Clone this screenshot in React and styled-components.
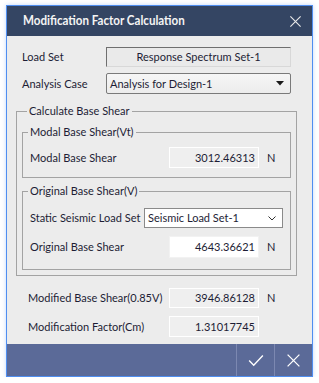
import React from "react";
import styled, { createGlobalStyle } from "styled-components";

const Global = createGlobalStyle`
  html, body { margin: 0; padding: 0; background: #ffffff; }
  body { font-family: Lato, "Liberation Sans", sans-serif; }
  * { box-sizing: border-box; }
`;

const Window = styled.div`
  margin: 5px 0 0 6px;
  width: 307px;
  border: 1px solid #4f8ef0;
  box-shadow: 0 0 4px rgba(80, 140, 240, 0.35);
  background: #ececec;
  display: flex;
  flex-direction: column;
`;

const TitleBar = styled.div`
  height: 30px;
  background: #344563;
  display: flex;
  align-items: center;
  justify-content: space-between;
  padding: 0 10px 0 16px;
`;

const Title = styled.div`
  color: #f4f4f4;
  font-size: 11.6px;
  font-weight: 700;
  line-height: 16px;
  transform: scaleY(1.12);
`;

const Body = styled.div`
  padding: 11px 0 7px 9px;
  display: flex;
  flex-direction: column;
  font-size: 11px;
  color: #1d1d35;
`;

const TopRow = styled.div`
  display: grid;
  grid-template-columns: 84px 185px;
  align-items: center;
  padding-left: 6px;
  margin-top: ${(p) => p.$mt || 0}px;
`;

const Label = styled.div`
  white-space: nowrap;
  line-height: 14px;
`;

const ReadOnly = styled.div`
  height: 20px;
  border-top: 1px solid #6f6f6f;
  border-left: 1px solid #6f6f6f;
  border-right: 1px solid #d8d8d8;
  border-bottom: 1px solid #d8d8d8;
  background: #eaeaea;
  display: flex;
  align-items: center;
  justify-content: center;
  line-height: 14px;
`;

const Select = styled.div`
  height: ${(p) => p.$h || 21}px;
  border: 1px solid ${(p) => (p.$flat ? "#8a8a8a" : "#7a7a7a")};
  border-radius: ${(p) => (p.$flat ? 0 : 2)}px;
  background: ${(p) => (p.$flat ? "#ffffff" : "linear-gradient(#f6f6f6, #ececec)")};
  display: flex;
  align-items: center;
  justify-content: space-between;
  padding: 0 6px 0 3px;
  line-height: 14px;
`;

const Group = styled.fieldset`
  margin: ${(p) => p.$m || "0"};
  padding: ${(p) => p.$p || "0"};
  border: 1px solid #a3a3a3;
  min-width: 0;
  display: flex;
  flex-direction: column;
`;

const Legend = styled.legend`
  padding: 0 2px;
  margin-left: 5px;
  line-height: 14px;
  font-size: 11px;
  color: #1d1d35;
`;

const FieldRow = styled.div`
  display: grid;
  grid-template-columns: ${(p) => p.$label}px 90px 31px;
  align-items: center;
  padding-left: ${(p) => p.$pl}px;
  margin-top: ${(p) => p.$mt || 0}px;
`;

const SelectRow = styled.div`
  display: grid;
  grid-template-columns: 114px 139px;
  align-items: center;
  padding-left: 7px;
`;

const NumField = styled.div`
  height: ${(p) => p.$h || 21}px;
  background: ${(p) => (p.$white ? "#ffffff" : "#efefef")};
  border: 1px solid ${(p) => (p.$white ? "#f2f2f2" : "#ffffff")};
  display: flex;
  align-items: center;
  justify-content: flex-end;
  padding-right: 3px;
  line-height: 14px;
`;

const Unit = styled.div`
  padding-left: 8px;
  line-height: 14px;
`;

const Footer = styled.div`
  height: 32px;
  background: #5b6a98;
  display: flex;
  justify-content: flex-end;
`;

const FooterButton = styled.div`
  width: 38px;
  border-left: 1px solid #7c88b1;
  display: flex;
  align-items: center;
  justify-content: center;
`;

const Stroke = ({ d, size = 14, color = "#ffffff", w = 1.2 }) => (
  <svg width={size} height={size} viewBox="0 0 14 14">
    <path d={d} fill="none" stroke={color} strokeWidth={w} />
  </svg>
);

export default function App() {
  return (
    <>
      <Global />
      <Window>
        <TitleBar>
          <Title>Modification Factor Calculation</Title>
          <Stroke d="M1.5 1.5 L12.5 12.5 M12.5 1.5 L1.5 12.5" size={13} color="#e8e8e8" />
        </TitleBar>
        <Body>
          <TopRow>
            <Label>Load Set</Label>
            <ReadOnly>Response Spectrum Set-1</ReadOnly>
          </TopRow>
          <TopRow $mt={6}>
            <Label>Analysis Case</Label>
            <Select>
              <span>Analysis for Design-1</span>
              <svg width="8" height="5" viewBox="0 0 8 5">
                <path d="M0 0 L8 0 L4 4.5 Z" fill="#1a1a1a" />
              </svg>
            </Select>
          </TopRow>
          <Group $m="10px 0 0 0" $p="7px 5px 5px 5px" style={{ width: 281 }}>
            <Legend>Calculate Base Shear</Legend>
            <Group $p="8px 0 9px 0">
              <Legend>Modal Base Shear(Vt)</Legend>
              <FieldRow $label={139} $pl={7}>
                <Label>Modal Base Shear</Label>
                <NumField>3012.46313</NumField>
                <Unit>N</Unit>
              </FieldRow>
            </Group>
            <Group $m="6px 0 0 0" $p="10px 0 11px 0">
              <Legend>Original Base Shear(V)</Legend>
              <SelectRow>
                <Label>Static Seismic Load Set</Label>
                <Select $flat $h={20}>
                  <span>Seismic Load Set-1</span>
                  <svg width="8" height="5" viewBox="0 0 8 5">
                    <path d="M0.5 0.5 L4 4 L7.5 0.5" fill="none" stroke="#333" strokeWidth="1" />
                  </svg>
                </Select>
              </SelectRow>
              <FieldRow $label={139} $pl={7} $mt={8}>
                <Label>Original Base Shear</Label>
                <NumField $white $h={22}>4643.36621</NumField>
                <Unit>N</Unit>
              </FieldRow>
            </Group>
          </Group>
          <FieldRow $label={141} $pl={12} $mt={12}>
            <Label>Modified Base Shear(0.85V)</Label>
            <NumField $h={20}>3946.86128</NumField>
            <Unit>N</Unit>
          </FieldRow>
          <FieldRow $label={141} $pl={12} $mt={8}>
            <Label>Modification Factor(Cm)</Label>
            <NumField>1.31017745</NumField>
            <Unit />
          </FieldRow>
        </Body>
        <Footer>
          <FooterButton>
            <Stroke d="M1 7.5 L5 11.5 L13 3" size={16} />
          </FooterButton>
          <FooterButton>
            <Stroke d="M1.5 1.5 L12.5 12.5 M12.5 1.5 L1.5 12.5" size={15} />
          </FooterButton>
        </Footer>
      </Window>
    </>
  );
}
